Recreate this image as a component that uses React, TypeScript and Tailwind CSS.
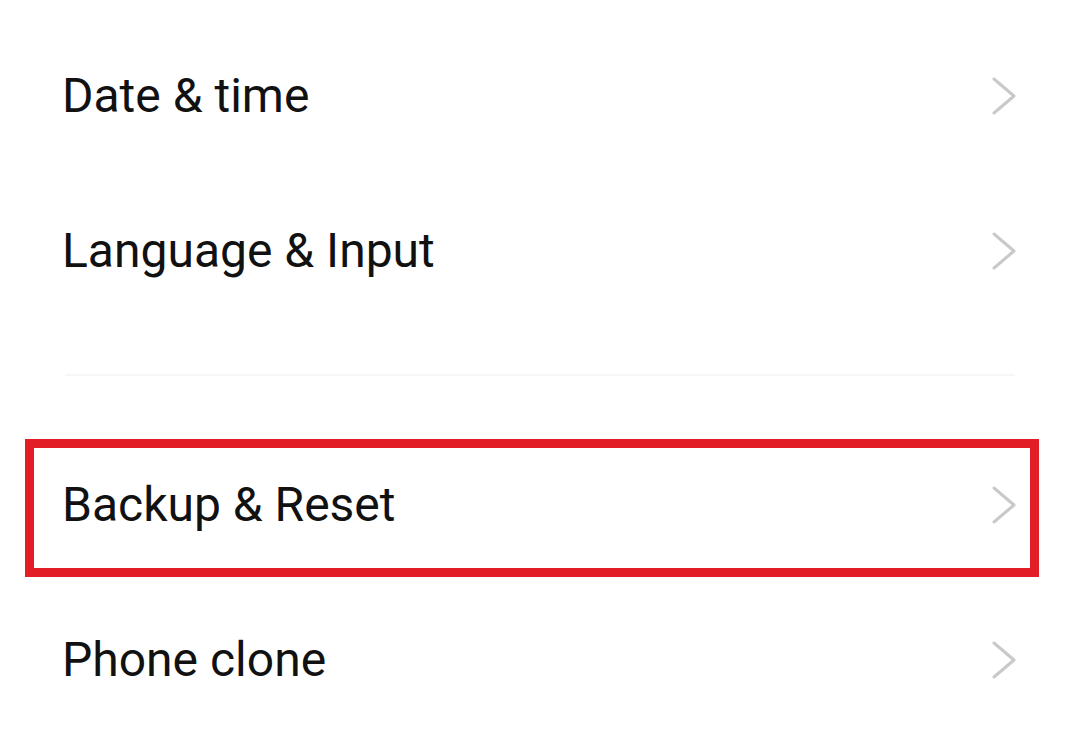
import React from 'react';

function Chevron() {
  return (
    <svg width="26" height="38" viewBox="0 0 26 38" fill="none" className="shrink-0">
      <path d="M3 2 L23 19 L3 36" stroke="#c9c9c9" strokeWidth="3" strokeLinecap="round" strokeLinejoin="round" />
    </svg>
  );
}

function Row({ label }: { label: string }) {
  return (
    <div className="h-[155px] flex items-center justify-between pl-[62px] pr-[63px]">
      <span className="text-[48px] leading-none text-[#111111]">{label}</span>
      <Chevron />
    </div>
  );
}

export default function App() {
  return (
    <div className="w-[1080px] h-[744px] bg-white overflow-hidden flex flex-col pt-[18px]" style={{ fontFamily: 'Roboto, "Noto Sans", sans-serif' }}>
      <Row label="Date & time" />
      <Row label="Language & Input" />

      {/* section divider */}
      <div className="h-[111px] flex flex-col">
        <div className="h-[46px]" />
        <div className="mx-[65px] h-[2px] bg-[#f6f6f6]" />
      </div>

      {/* highlighted row */}
      <div className="ml-[25px] mr-[41px] h-[138px] border-[9px] border-[#e31d25] flex items-center justify-between pl-[28px] pr-[13px] pb-[6px]">
        <span className="text-[48px] leading-none text-[#111111]">Backup &amp; Reset</span>
        <Chevron />
      </div>

      <div className="mt-[5px]">
        <Row label="Phone clone" />
      </div>
    </div>
  );
}
